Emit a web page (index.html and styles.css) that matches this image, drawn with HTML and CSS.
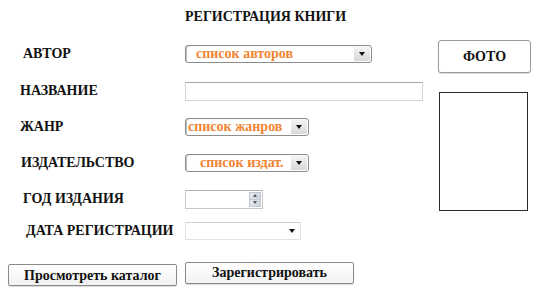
FILE: index.html
```html
<!DOCTYPE html>
<html lang="ru">
<head>
<meta charset="utf-8">
<title>Регистрация книги</title>
<link rel="stylesheet" href="styles.css">
</head>
<body>
<div class="page">
  <div class="main">
    <h1 class="title">РЕГИСТРАЦИЯ КНИГИ</h1>
    <div class="form">
      <div class="row r1">
        <div class="label l-author">АВТОР</div>
        <div class="select sel-author"><span class="val">список авторов</span><span class="btn"><i class="tri"></i></span></div>
      </div>
      <div class="row r2">
        <div class="label l-name">НАЗВАНИЕ</div>
        <div class="text"></div>
      </div>
      <div class="row r3">
        <div class="label l-genre">ЖАНР</div>
        <div class="select sel-genre"><span class="val tight">список жанров</span><span class="btn"><i class="tri"></i></span></div>
      </div>
      <div class="row r4">
        <div class="label l-pub">ИЗДАТЕЛЬСТВО</div>
        <div class="select sel-pub"><span class="val indent">список издат.</span><span class="btn"><i class="tri"></i></span></div>
      </div>
      <div class="row r5">
        <div class="label l-year">ГОД ИЗДАНИЯ</div>
        <div class="number"><span class="spin"><i class="up"></i><i class="down"></i></span></div>
      </div>
      <div class="row r6">
        <div class="label l-date">ДАТА РЕГИСТРАЦИИ</div>
        <div class="date"><i class="tri"></i></div>
      </div>
    </div>
    <div class="actions">
      <button class="b b-catalog">Просмотреть каталог</button>
      <button class="b b-reg">Зарегистрировать</button>
    </div>
  </div>
  <aside class="photo-col">
    <button class="photo-btn">ФОТО</button>
    <div class="photo"></div>
  </aside>
</div>
</body>
</html>
```

FILE: styles.css
```css
* { box-sizing: border-box; }
html, body { margin: 0; padding: 0; background: #fff; }
body, button {
  font-family: "Liberation Serif", "Times New Roman", Tinos, "DejaVu Serif", serif;
  font-weight: bold;
  font-size: 14px;
  color: #111;
}
.page { display: flex; width: 539px; height: 291px; }
.main { width: 438px; }
.title {
  margin: 0;
  height: 35px;
  padding: 9px 0 0 185px;
  font-size: 14px;
  line-height: 16px;
  font-weight: bold;
}
.form { display: flex; flex-direction: column; }
.row { display: flex; align-items: center; }
.r1 { height: 37px; }
.r2 { height: 38px; }
.r3 { height: 33px; }
.r4 { height: 39px; }
.r5 { height: 34px; }
.r6 { height: 30px; }
.label { width: 185px; line-height: 16px; white-space: nowrap; }
.l-author { padding-left: 23px; }
.l-name { padding-left: 20px; }
.l-genre { padding-left: 20px; }
.l-pub { padding-left: 21px; }
.l-year { padding-left: 23px; }
.l-date { padding-left: 26px; }

.select {
  height: 18px;
  border: 1px solid #8d8d8d;
  border-radius: 3px;
  background: #fff;
  box-shadow: inset 2px 1px 1px -1px #bdbdbd;
  display: flex;
  align-items: stretch;
  color: #f08433;
  font-size: 14px;
}
.sel-author { width: 187px; }
.sel-genre, .sel-pub { width: 124px; }
.select .val { flex: 1; line-height: 16px; padding-left: 10px; white-space: nowrap; overflow: hidden; }
.select .val.tight { padding-left: 2px; }
.select .val.indent { padding-left: 14px; }
.select .btn {
  width: 16px;
  margin: 1px;
  border-radius: 0 2px 2px 0;
  background: linear-gradient(#f4f4f4, #d8d8d8);
  display: flex; align-items: center; justify-content: center;
}
.tri {
  width: 0; height: 0;
  border-left: 3px solid transparent;
  border-right: 3px solid transparent;
  border-top: 4px solid #111;
}
.text {
  width: 238px; height: 19px;
  border: 1px solid #d4d4d4;
  border-top-color: #a9a9a9;
  background: #fff;
}
.number {
  width: 78px; height: 19px;
  border: 1px solid #c8c8c8;
  border-top-color: #b0b0b0;
  display: flex; justify-content: flex-end; padding: 1px;
}
.spin {
  width: 12px; display: flex; flex-direction: column;
  background: linear-gradient(90deg, #e4e8ee, #cfd5de);
  border: 1px solid #c3c9d2;
}
.spin i { flex: 1; display: flex; align-items: center; justify-content: center; }
.spin .up::before {
  content: ""; border-left: 2px solid transparent; border-right: 2px solid transparent;
  border-bottom: 3px solid #556;
}
.spin .down { border-top: 1px solid #c3c9d2; }
.spin .down::before {
  content: ""; border-left: 2px solid transparent; border-right: 2px solid transparent;
  border-top: 3px solid #556;
}
.date {
  width: 116px; height: 18px;
  border: 1px solid #e2e2e2;
  border-top-color: #d0d0d0;
  display: flex; align-items: center; justify-content: flex-end;
  padding-right: 5px;
}
.actions {
  display: flex; align-items: flex-start; gap: 8px;
  padding: 16px 0 0 8px;
}
.b {
  height: 22px; padding: 0; line-height: 18px;
  border: 1px solid #8a8a8a; border-radius: 2px;
  background: linear-gradient(#ffffff, #f2f2f2);
  box-shadow: 0 1px 1px rgba(0,0,0,0.15);
}
.b-catalog { width: 169px; margin-top: 2px; padding-top: 2px; }
.b-reg { width: 169px; }
.photo-col { display: flex; flex-direction: column; padding-top: 40px; }
.photo-btn {
  width: 93px; height: 33px; padding: 0;
  border: 1px solid #9a9a9a; border-radius: 3px;
  background: #fff;
  box-shadow: 0 1px 1px rgba(0,0,0,0.15);
}
.photo {
  margin: 19px 0 0 1px;
  width: 89px; height: 119px;
  border: 1px solid #2a2a2a;
}
```
